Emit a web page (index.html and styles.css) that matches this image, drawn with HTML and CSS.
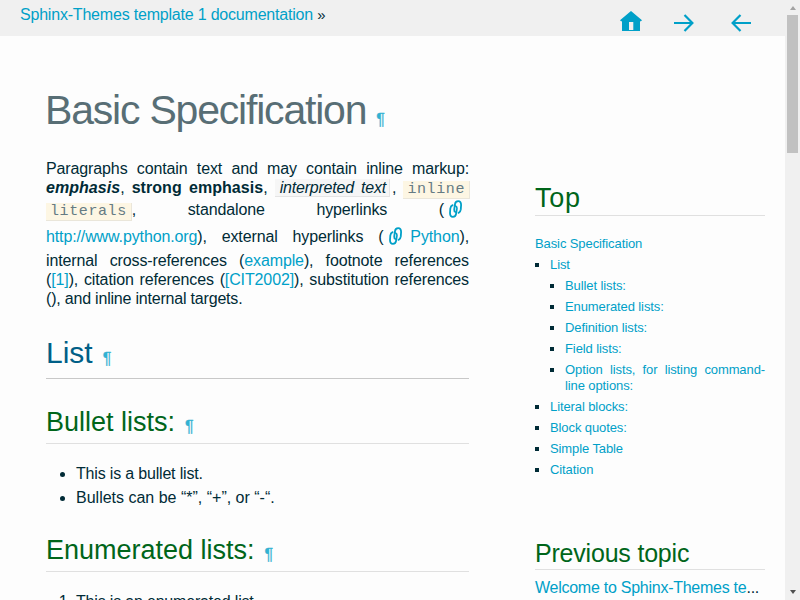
FILE: index.html
```
<!DOCTYPE html>
<html lang="en">
<head>
<meta charset="utf-8">
<title>Basic Specification</title>
<link rel="stylesheet" href="styles.css">
</head>
<body>
<svg width="0" height="0" class="defs"><defs>
<g id="chain" fill="none" stroke="#00a0c8" stroke-width="1.8" stroke-linecap="round" stroke-linejoin="round"><path d="M3.6 5.2Q1.6 6 1.3 8.6L1 13Q1 16.8 3.9 16.8 6.8 16.8 7.2 13.4L7.9 8.4Q8 6.4 6.6 6"/><path d="M9.6 12.8Q11.5 12 11.8 9.4L12.1 5Q12.1 1.2 9.2 1.2 6.3 1.2 5.9 4.6L5.2 9.6Q5.1 11.6 6.4 12"/></g>
</defs></svg>
<div class="page">
  <header class="bar">
    <div class="crumb"><a>Sphinx-Themes template 1 documentation</a> <small>»</small></div>
    <nav class="icons">
      <svg width="22" height="22" viewBox="0 0 22 22"><path fill="#00a0c8" d="M11 0 22 9.2 20.7 10.5 20 10V20H2V10L1.3 10.5 0 9.2ZM9 11V19H13.3V11Z"/></svg>
      <svg width="22" height="22" viewBox="0 0 22 22"><path fill="none" stroke="#00a0c8" stroke-width="2.2" d="M1 12H20M11.5 4 19.4 12 11.5 20"/></svg>
      <svg width="22" height="22" viewBox="0 0 22 22"><path fill="none" stroke="#00a0c8" stroke-width="2.2" d="M21 12H2M10.5 4 2.6 12 10.5 20"/></svg>
    </nav>
  </header>
  <div class="content">
    <main>
      <h1><span>Basic Specification</span><a class="pil">¶</a></h1>
      <div class="para">
        <div class="l l1">Paragraphs contain text and may contain inline markup:</div>
        <div class="l l2"><b><i>emphasis</i></b>, <b>strong emphasis</b>, <i class="interp">interpreted text</i>, <code>inline</code></div>
        <div class="l l3"><code>literals</code>, standalone hyperlinks (<svg class="chain" width="14" height="18"><use href="#chain"/></svg></div>
        <div class="l l4"><a>http://www.python.org</a>), external hyperlinks (<svg class="chain mid" width="14" height="18"><use href="#chain"/></svg><a>Python</a>),</div>
        <div class="l l5">internal cross-references (<a>example</a>), footnote references</div>
        <div class="l l6">(<a>[1]</a>), citation references (<a>[CIT2002]</a>), substitution references</div>
        <div class="l l7">(), and inline internal targets.</div>
      </div>
      <h2><span>List</span><a class="pil">¶</a></h2>
      <h3><span>Bullet lists:</span><a class="pil">¶</a></h3>
      <ul class="bullets"><li class="this">This is a bullet list.</li><li>Bullets can be “*”, “+”, or “-“.</li></ul>
      <h3><span>Enumerated lists:</span><a class="pil">¶</a></h3>
      <ol class="bullets"><li class="this">This is an enumerated list.</li></ol>
    </main>
    <aside>
      <h3 class="top"><span>Top</span></h3>
      <div class="toc">
        <a>Basic Specification</a>
        <ul>
          <li><a>List</a>
            <ul>
              <li><a>Bullet lists:</a></li>
              <li><a>Enumerated lists:</a></li>
              <li><a>Definition lists:</a></li>
              <li><a>Field lists:</a></li>
              <li><a>Option lists, for listing command-line options:</a></li>
            </ul>
          </li>
          <li><a>Literal blocks:</a></li>
          <li><a>Block quotes:</a></li>
          <li><a>Simple Table</a></li>
          <li><a>Citation</a></li>
        </ul>
      </div>
      <h4><span>Previous topic</span></h4>
      <div class="prev"><a>Welcome to Sphinx-Themes te</a>...</div>
    </aside>
  </div>
</div>
<div class="scroll"><i class="up"></i><div class="thumb"></div><i class="down"></i></div>
</body>
</html>
```
FILE: styles.css
```
* { box-sizing: border-box; }
body { margin: 0; height: 600px; overflow: hidden; display: flex; background: #fdfdfd; color: #002b36; font: 16px/19px "Liberation Sans", sans-serif; }
.defs { position: absolute; }
a { color: #00a0c8; }
.page { width: 785px; height: 600px; overflow: hidden; }
.bar { height: 36px; background: #f0f0f0; display: flex; justify-content: space-between; padding: 5px 33px 0 20px; }
.crumb { letter-spacing: -.2px; }
.crumb small { font-size: 15px; }
.icons { display: flex; gap: 33px; padding-top: 6px; }
.icons svg { display: block; }
.icons svg:nth-child(2) { margin: 0 2px 0 -2px; }
.content { display: flex; justify-content: space-between; padding: 0 20px 0 46px; }
main { width: 423px; }
h1, h2, h3, h4 { margin: 0; font-weight: 400; white-space: nowrap; }
.pil { font-size: 16px; letter-spacing: 0; margin-left: 10px; opacity: .8; position: relative; top: 1px; -webkit-text-stroke: .3px #00a0c8; }
h1 { font-size: 41px; line-height: 48px; letter-spacing: -1.2px; color: #586e75; margin-top: 50px; }
h1 span { margin-left: -1px; }
.para { margin-top: 16px; letter-spacing: -.12px; }
.l { white-space: nowrap; text-align-last: justify; height: 19px; }
.l3 { height: 22px; padding-top: 3px; padding-right: 6px; }
.l4 { height: 27px; padding-top: 8px; }
.l5 { height: 24px; padding-top: 5px; }
.l2 { margin-right: -1px; }
.l2 b { letter-spacing: .05px; }
.l7 { text-align-last: left; letter-spacing: -.2px; }
code { font: 16px/16px "Liberation Mono", monospace; font-size: 15px; letter-spacing: .6px; color: #657b83; background: #fdf6e3; padding: 0 4px; border-right: 1px solid #eae6da; border-bottom: 1px solid #eae6da; }
.interp { background: #f6f6f6; border-right: 1px solid #e4e4e4; border-bottom: 1px solid #e4e4e4; padding: 0 3px 0 5px; margin-right: 2px; letter-spacing: -.2px; }
.chain { margin: -5px 0 -5px 5px; vertical-align: 2px; }
.chain.mid { margin-left: 6px; margin-right: 7px; }
h2 { font-size: 30px; line-height: 38px; color: #005f87; height: 45px; margin-top: 26px; border-bottom: 1px solid #c8c8c8; }
h3 { font-size: 27px; line-height: 34px; color: #00651a; height: 39px; margin-top: 26px; border-bottom: 1px solid #e0e0e0; }
.bullets { margin: 20px 0 0; padding-left: 30px; }
.bullets li { height: 24px; }
.this { letter-spacing: -.18px; }
.bullets + h3 { margin-top: 22px; height: 38px; line-height: 32px; }
aside { width: 230px; padding-top: 145px; }
aside h3 { margin: 0; height: 35px; letter-spacing: .8px; line-height: 34px; }
.toc { margin-top: 20px; font-size: 13px; line-height: 16px; text-align: justify; letter-spacing: -.1px; }
.toc ul { margin: 0; padding-left: 15px; list-style: none; }
.toc li { margin-top: 5px; position: relative; }
.toc li::before { content: ""; position: absolute; left: -15px; top: 6px; width: 4px; height: 4px; background: #002b36; }
h4 { font-size: 25px; line-height: 30px; height: 32px; margin-top: 60px; color: #00651a; border-bottom: 1px solid #e0e0e0; letter-spacing: -.2px; }
.prev { margin-top: 8px; white-space: nowrap; letter-spacing: -.26px; }
.scroll { width: 15px; height: 600px; background: #f0f0f0; display: flex; flex-direction: column; align-items: center; }
.thumb { width: 11px; height: 138px; background: #c1c1c1; margin-top: 5px; }
.up, .down { border: 3.5px solid transparent; border-top: 0; border-bottom: 4px solid #a3a3a3; margin-top: 6px; }
.down { border-bottom: 0; border-top: 4px solid #505050; margin-top: auto; margin-bottom: 6px; }
```
